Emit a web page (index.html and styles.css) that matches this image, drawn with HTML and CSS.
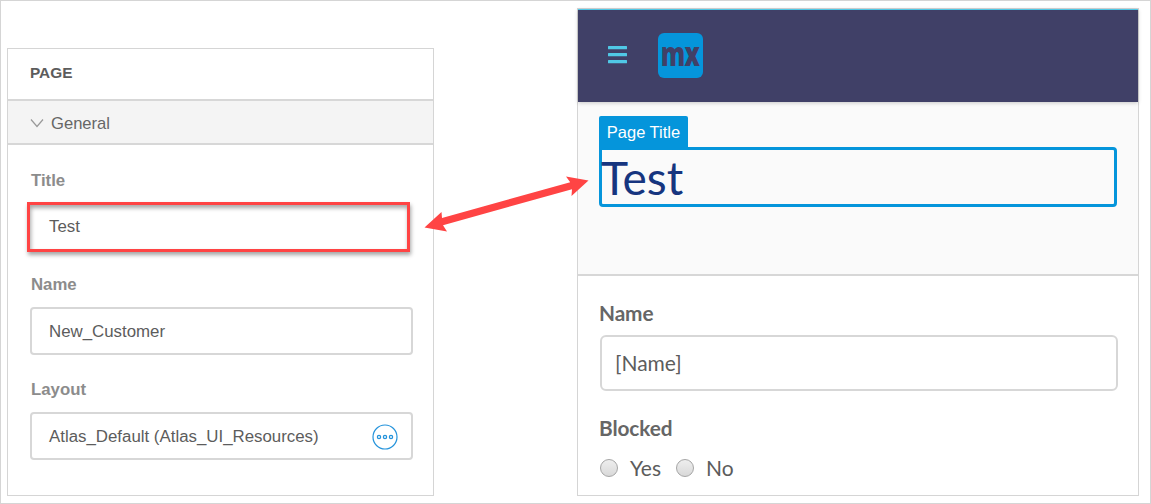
FILE: index.html
```html
<!DOCTYPE html>
<html lang="en">
<head>
<meta charset="utf-8">
<title>Page title</title>
<link rel="stylesheet" href="styles.css">
</head>
<body>
<main class="frame">
  <section class="props">
    <header class="props-head">PAGE</header>
    <div class="group-head">
      <svg class="chevron" width="14" height="9" viewBox="0 0 14 9"><path d="M1 .5l6 7L13 .5" fill="none" stroke="#999" stroke-width="1.2"/></svg>
      <span>General</span>
    </div>
    <div class="fields">
      <label class="label">Title</label>
      <div class="field highlighted"><span class="value">Test</span></div>
      <label class="label">Name</label>
      <div class="field"><span class="value">New_Customer</span></div>
      <label class="label">Layout</label>
      <div class="field"><span class="value">Atlas_Default (Atlas_UI_Resources)</span>
        <svg class="more" width="26" height="26" viewBox="0 0 26 26" fill="none" stroke="#2493db"><circle cx="13" cy="13" r="12" stroke-width="1.2"/><g stroke-width="1.3"><circle cx="7" cy="13" r="1.6"/><circle cx="13" cy="13" r="1.6"/><circle cx="19" cy="13" r="1.6"/></g></svg>
      </div>
    </div>
  </section>

  <section class="preview">
    <header class="topbar">
      <svg class="menu" width="19" height="18" viewBox="0 0 19 18" fill="#50c8e6"><rect width="19" height="3.3" y="0" rx=".5"/><rect width="19" height="3.3" y="7" rx=".5"/><rect width="19" height="3.3" y="14" rx=".5"/></svg>
      <div class="logo"><span>mx</span></div>
    </header>
    <div class="hero">
      <div class="tag">Page Title</div>
      <div class="title-box"><h1 class="title">Test</h1></div>
    </div>
    <div class="form">
      <div class="form-label">Name</div>
      <div class="input">[Name]</div>
      <div class="form-label blocked">Blocked</div>
      <div class="radios">
        <span class="radio"></span><span class="yes">Yes</span>
        <span class="radio"></span><span>No</span>
      </div>
    </div>
  </section>

  <svg class="arrow" width="166" height="58" viewBox="0 0 166 58"><path fill="#ff4444" d="M1.5 51.5L18.5 36L19 42L147.2 6.2L143 0.5L165.5 4.5L148.5 20L149 13.2L20 49.3L24 55.5Z"/></svg>
</main>
</body>
</html>
```
FILE: styles.css
```css
* { box-sizing: border-box; }
body { margin: 0; background: #fff; font-family: "Liberation Sans", Arial, sans-serif; }
.frame { position: relative; display: flex; width: 1151px; height: 504px; padding: 7px 11px 8px 6px; border: 1px solid #d5d5d5; justify-content: space-between; }

.props { width: 427px; height: 448px; margin-top: 40px; border: 1px solid #d5d5d5; color: #5c5c5c; }
.props-head { height: 52px; padding-left: 22px; border-bottom: 2px solid #d7d7d7; font-size: 15.4px; font-weight: bold; line-height: 48px; }
.group-head { display: flex; align-items: center; gap: 7px; height: 44px; padding-left: 22px; background: #f4f4f4; border-bottom: 2px solid #d7d7d7; font-size: 16.6px; color: #666; }
.chevron { margin-top: 2px; }
.group-head span { line-height: 38px; padding-top: 4px; }
.fields { padding: 25px 21px 0 22px; }
.label { display: block; height: 20px; margin-bottom: 13px; padding-left: 1px; font-size: 16.8px; font-weight: bold; line-height: 21px; color: #8c8c8c; }
.field + .label { line-height: 19px; }
.field { display: flex; align-items: center; justify-content: space-between; height: 48px; margin: -1px -1px 25px 0; padding: 1px 13px 0 17px; border: 2px solid #d7d7d7; border-radius: 4px; font-size: 16.85px; }
.highlighted { height: 50px; margin: -1px 2px 23px -3px; padding: 0 0 0 19px; border: 3px solid #ff4444; border-radius: 0; box-shadow: 1px 3px 4px rgba(0,0,0,.35), inset 1px 3px 4px rgba(0,0,0,.35); }
.more { flex: none; }

.preview { width: 562px; height: 488px; border: 1px solid #d5d5d5; color: #5c5c5c; font-family: Lato, sans-serif; }
.topbar { position: relative; display: flex; align-items: center; gap: 31px; height: 93px; padding: 0 0 2px 30px; border-top: 1px solid #50c8e6; background: #404067; box-shadow: 0 1px 4px rgba(0,0,0,.2); }
.logo { display: flex; justify-content: center; width: 45px; height: 45px; border-radius: 6px; background: #0595db; }
.logo span { margin-left: -2px; font-family: "Open Sans", sans-serif; font-size: 33px; font-weight: 800; line-height: 42px; letter-spacing: -1px; color: #404067; transform: scaleX(.74); }
.hero { height: 174px; padding: 14px 21px 0; border-bottom: 2px solid #d7d7d7; background: #fafafa; }
.tag { width: 89px; height: 31px; border-radius: 2px 2px 0 0; background: #0595db; color: #fff; font-family: "Liberation Sans", Arial, sans-serif; font-size: 16.5px; line-height: 32px; text-align: center; }
.title-box { height: 60px; width: 518px; border: 3px solid #0595db; border-radius: 0 4px 4px 4px; }
.title { margin: 0 0 0 -1px; font-size: 46px; font-weight: 400; line-height: 55px; color: #16357f; }
.form { padding: 25px 20px 0 22px; font-size: 21px; }
.form-label { height: 24px; margin-left: -1px; font-weight: 700; font-size: 20.8px; letter-spacing: -.1px; line-height: 24px; color: #666; }
.input { height: 56px; margin-top: 10px; padding-left: 13px; border: 2px solid #d7d7d7; border-radius: 6px; line-height: 52px; }
.blocked { margin-top: 25px; }
.radios { display: flex; align-items: center; margin-top: 15px; height: 26px; line-height: 26px; }
.radio { width: 18px; height: 18px; margin-right: 12px; border: 1px solid #a5a5a5; border-radius: 50%; background: linear-gradient(#eee, #d9d9d9); }
.yes { margin-right: 15px; }
.arrow { position: absolute; left: 422px; top: 175px; }
```
